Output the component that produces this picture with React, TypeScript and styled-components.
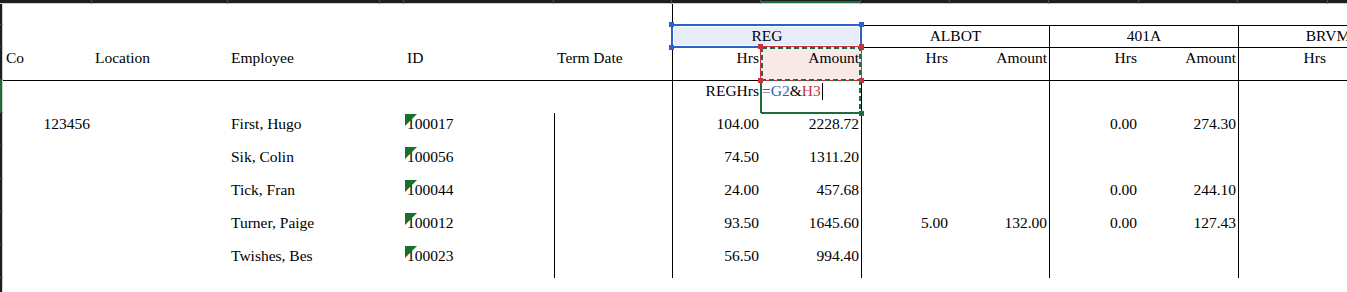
import React from 'react';
import styled, { createGlobalStyle } from 'styled-components';

// column widths A..N and row heights 1..10, in px
const COLS = [89, 136, 152, 24, 150, 118, 89, 100, 89, 99, 90, 99, 90, 89];
const ROWS = [21, 22, 33, 33, 33, 33, 33, 33, 33, 33];

const INK = '#000';
const BLUE = '#2a62c8';
const RED = '#c8323c';
const GREEN = '#1d6b3f';

const GlobalStyle = createGlobalStyle`
  html, body {
    margin: 0;
    padding: 0;
    background: #fff;
    overflow: hidden;
  }
  body {
    font-family: 'Liberation Serif', 'Times New Roman', serif;
  }
`;

const Window = styled.div`
  width: 1347px;
  height: 292px;
  overflow: hidden;
  display: grid;
  grid-template-columns: 3px max-content;
  grid-template-rows: 4px max-content;
  background: #fff;
`;

const Corner = styled.div`
  background: #1e1e1e;
  border-bottom: 1px solid #cfcfcf;
`;

const ColHeaderBar = styled.div`
  display: grid;
  grid-template-columns: ${COLS.map(w => `${w}px`).join(' ')};
`;

const ColTick = styled.div<{ $selected?: boolean }>`
  box-sizing: border-box;
  height: 4px;
  background: #1e1e1e;
  border-right: 1px solid #4c4c4c;
  border-bottom: 1px solid #cfcfcf;
  box-shadow: ${p => (p.$selected ? `inset 0 -2px 0 ${GREEN}` : 'none')};
`;

const RowHeaderBar = styled.div`
  display: grid;
  grid-template-rows: ${ROWS.map(h => `${h}px`).join(' ')};
`;

const RowTick = styled.div<{ $selected?: boolean }>`
  box-sizing: border-box;
  width: 3px;
  background: #1e1e1e;
  border-right: 1px solid #cfcfcf;
  border-bottom: 1px solid #4c4c4c;
  box-shadow: ${p => (p.$selected ? `inset -2px 0 0 ${GREEN}` : 'none')};
`;

const Sheet = styled.div`
  display: grid;
  grid-template-columns: ${COLS.map(w => `${w}px`).join(' ')};
  grid-template-rows: ${ROWS.map(h => `${h}px`).join(' ')};
  font-size: 15.5px;
  line-height: 18px;
  color: ${INK};
`;

const edgeShadow = (edges?: string) => {
  if (!edges) return 'none';
  const parts: string[] = [];
  if (edges.includes('l')) parts.push(`inset 1px 0 0 ${INK}`);
  if (edges.includes('t')) parts.push(`inset 0 1px 0 ${INK}`);
  return parts.join(', ');
};

const Cell = styled.div<{
  $col: number;
  $row: number;
  $span?: number;
  $align?: 'left' | 'right' | 'center';
  $edges?: string;
}>`
  grid-column: ${p => p.$col} / span ${p => p.$span ?? 1};
  grid-row: ${p => p.$row};
  box-sizing: border-box;
  padding: 2px 2px 0 3px;
  text-align: ${p => p.$align ?? 'left'};
  white-space: nowrap;
  box-shadow: ${p => edgeShadow(p.$edges)};
`;

// formula reference highlight (blue G2:H2)
const RefRange = styled(Cell)<{ $tone: string; $fill: string }>`
  position: relative;
  z-index: 2;
  background: ${p => p.$fill};
  box-shadow: 0 0 0 1px ${p => p.$tone}, inset 0 0 0 1px ${p => p.$tone},
    inset 0 0 0 2px #fff;
`;

// referenced cell H3: thin red frame plus copy marquee
const RefCell = styled(Cell)<{ $tone: string; $fill: string }>`
  position: relative;
  z-index: 3;
  background: ${p => p.$fill};
  box-shadow: 0 0 0 1px ${p => p.$tone};
`;

// active cell H4 in edit mode
const EditCell = styled(Cell)`
  position: relative;
  z-index: 2;
  padding-left: 1px;
  box-shadow: -1px 0 0 ${GREEN}, inset 1px 0 0 ${GREEN}, 0 1px 0 ${GREEN},
    inset 0 -1px 0 ${GREEN};
`;

const Handle = styled.span<{ $tone: string; $x: 'left' | 'right'; $y: 'top' | 'bottom' }>`
  position: absolute;
  ${p => p.$x}: -3px;
  ${p => p.$y}: -3px;
  width: 5px;
  height: 5px;
  background: ${p => p.$tone};
`;

const Marquee = styled.svg`
  position: absolute;
  left: 0;
  top: 0;
  overflow: visible;
  pointer-events: none;
`;

const IdCell = styled(Cell)`
  position: relative;
`;

const ErrorFlag = styled.span`
  position: absolute;
  left: 1px;
  top: 1px;
  width: 0;
  height: 0;
  border-top: 12px solid #17702c;
  border-right: 12px solid transparent;
`;

const Token = styled.span<{ $tone?: string }>`
  color: ${p => p.$tone ?? INK};
`;

const Caret = styled.span`
  display: inline-block;
  width: 1px;
  height: 17px;
  margin-left: 1px;
  vertical-align: -4px;
  background: ${INK};
`;

const corners: Array<['left' | 'right', 'top' | 'bottom']> = [
  ['left', 'top'],
  ['right', 'top'],
  ['left', 'bottom'],
  ['right', 'bottom'],
];

const groups = [
  { label: 'ALBOT', col: 9 },
  { label: '401A', col: 11 },
  { label: 'BRVM', col: 13 },
];

type Pair = [string, string] | null;

const employees: Array<{ co?: string; name: string; id: string; reg: Pair; albot: Pair; k401: Pair }> = [
  { co: '123456', name: 'First, Hugo', id: '100017', reg: ['104.00', '2228.72'], albot: null, k401: ['0.00', '274.30'] },
  { name: 'Sik, Colin', id: '100056', reg: ['74.50', '1311.20'], albot: null, k401: null },
  { name: 'Tick, Fran', id: '100044', reg: ['24.00', '457.68'], albot: null, k401: ['0.00', '244.10'] },
  { name: 'Turner, Paige', id: '100012', reg: ['93.50', '1645.60'], albot: ['5.00', '132.00'], k401: ['0.00', '127.43'] },
  { name: 'Twishes, Bes', id: '100023', reg: ['56.50', '994.40'], albot: null, k401: null },
];

const PairCells: React.FC<{ col: number; row: number; values: Pair }> = ({ col, row, values }) => (
  <>
    <Cell $col={col} $row={row} $align="right" $edges="l">{values?.[0]}</Cell>
    <Cell $col={col + 1} $row={row} $align="right">{values?.[1]}</Cell>
  </>
);

export default function App() {
  return (
    <Window>
      <GlobalStyle />
      <Corner />
      <ColHeaderBar>
        {COLS.map((_, i) => (
          <ColTick key={i} $selected={i === 7} />
        ))}
      </ColHeaderBar>
      <RowHeaderBar>
        {ROWS.map((_, i) => (
          <RowTick key={i} $selected={i === 3} />
        ))}
      </RowHeaderBar>

      <Sheet>
        {/* row 1 */}
        <Cell $col={7} $row={1} $edges="l" />

        {/* row 2: pay code groups */}
        <RefRange $col={7} $span={2} $row={2} $align="center" $tone={BLUE} $fill="#e7edf8">
          REG
          {corners.map(([x, y]) => (
            <Handle key={x + y} $tone={BLUE} $x={x} $y={y} />
          ))}
        </RefRange>
        {groups.map(g => (
          <Cell key={g.label} $col={g.col} $span={2} $row={2} $align="center" $edges="lt">
            {g.label}
          </Cell>
        ))}

        {/* row 3: column captions */}
        <Cell $col={1} $row={3}>Co</Cell>
        <Cell $col={2} $row={3}>Location</Cell>
        <Cell $col={3} $row={3}>Employee</Cell>
        <Cell $col={5} $row={3}>ID</Cell>
        <Cell $col={6} $row={3}>Term Date</Cell>
        <Cell $col={7} $row={3} $align="right" $edges="l">Hrs</Cell>
        <RefCell $col={8} $row={3} $align="right" $tone={RED} $fill="#f9e8e8">
          Amount
          <Marquee width="100" height="33">
            <rect x="1" y="1" width="98" height="32" fill="none" stroke={GREEN} strokeWidth="2" strokeDasharray="5 3" />
          </Marquee>
          {corners.map(([x, y]) => (
            <Handle key={x + y} $tone={RED} $x={x} $y={y} />
          ))}
        </RefCell>
        {groups.map(g => (
          <React.Fragment key={g.label}>
            <Cell $col={g.col} $row={3} $align="right" $edges="lt">Hrs</Cell>
            {/* last group's Amount lies past the window edge */}
            <Cell $col={g.col + 1} $row={3} $align="right" $edges="t">
              {g.col < 13 ? 'Amount' : null}
            </Cell>
          </React.Fragment>
        ))}

        {/* row 4: formula being edited */}
        <Cell $col={1} $span={6} $row={4} $edges="t" />
        <Cell $col={7} $row={4} $align="right" $edges="lt">REGHrs</Cell>
        <EditCell $col={8} $row={4}>
          <Token $tone="#4a4a4a">=</Token>
          <Token $tone={BLUE}>G2</Token>
          <Token>&amp;</Token>
          <Token $tone={RED}>H3</Token>
          <Caret />
          <Marquee width="100" height="33">
            <line x1="99" y1="0" x2="99" y2="33" stroke={GREEN} strokeWidth="2" strokeDasharray="5 3" />
          </Marquee>
          <Handle $tone={GREEN} $x="right" $y="bottom" />
        </EditCell>
        {groups.map(g => (
          <React.Fragment key={g.label}>
            <Cell $col={g.col} $row={4} $edges="lt" />
            <Cell $col={g.col + 1} $row={4} $edges="t" />
          </React.Fragment>
        ))}

        {/* employee rows */}
        {employees.map((e, i) => {
          const row = 5 + i;
          return (
            <React.Fragment key={e.id}>
              <Cell $col={1} $row={row} $align="right">{e.co}</Cell>
              <Cell $col={3} $row={row}>{e.name}</Cell>
              <IdCell $col={5} $row={row}>
                {e.id}
                <ErrorFlag />
              </IdCell>
              <Cell $col={6} $row={row} $edges="l" />
              <PairCells col={7} row={row} values={e.reg} />
              <PairCells col={9} row={row} values={e.albot} />
              <PairCells col={11} row={row} values={e.k401} />
              <Cell $col={13} $row={row} $edges="l" />
            </React.Fragment>
          );
        })}
      </Sheet>
    </Window>
  );
}
